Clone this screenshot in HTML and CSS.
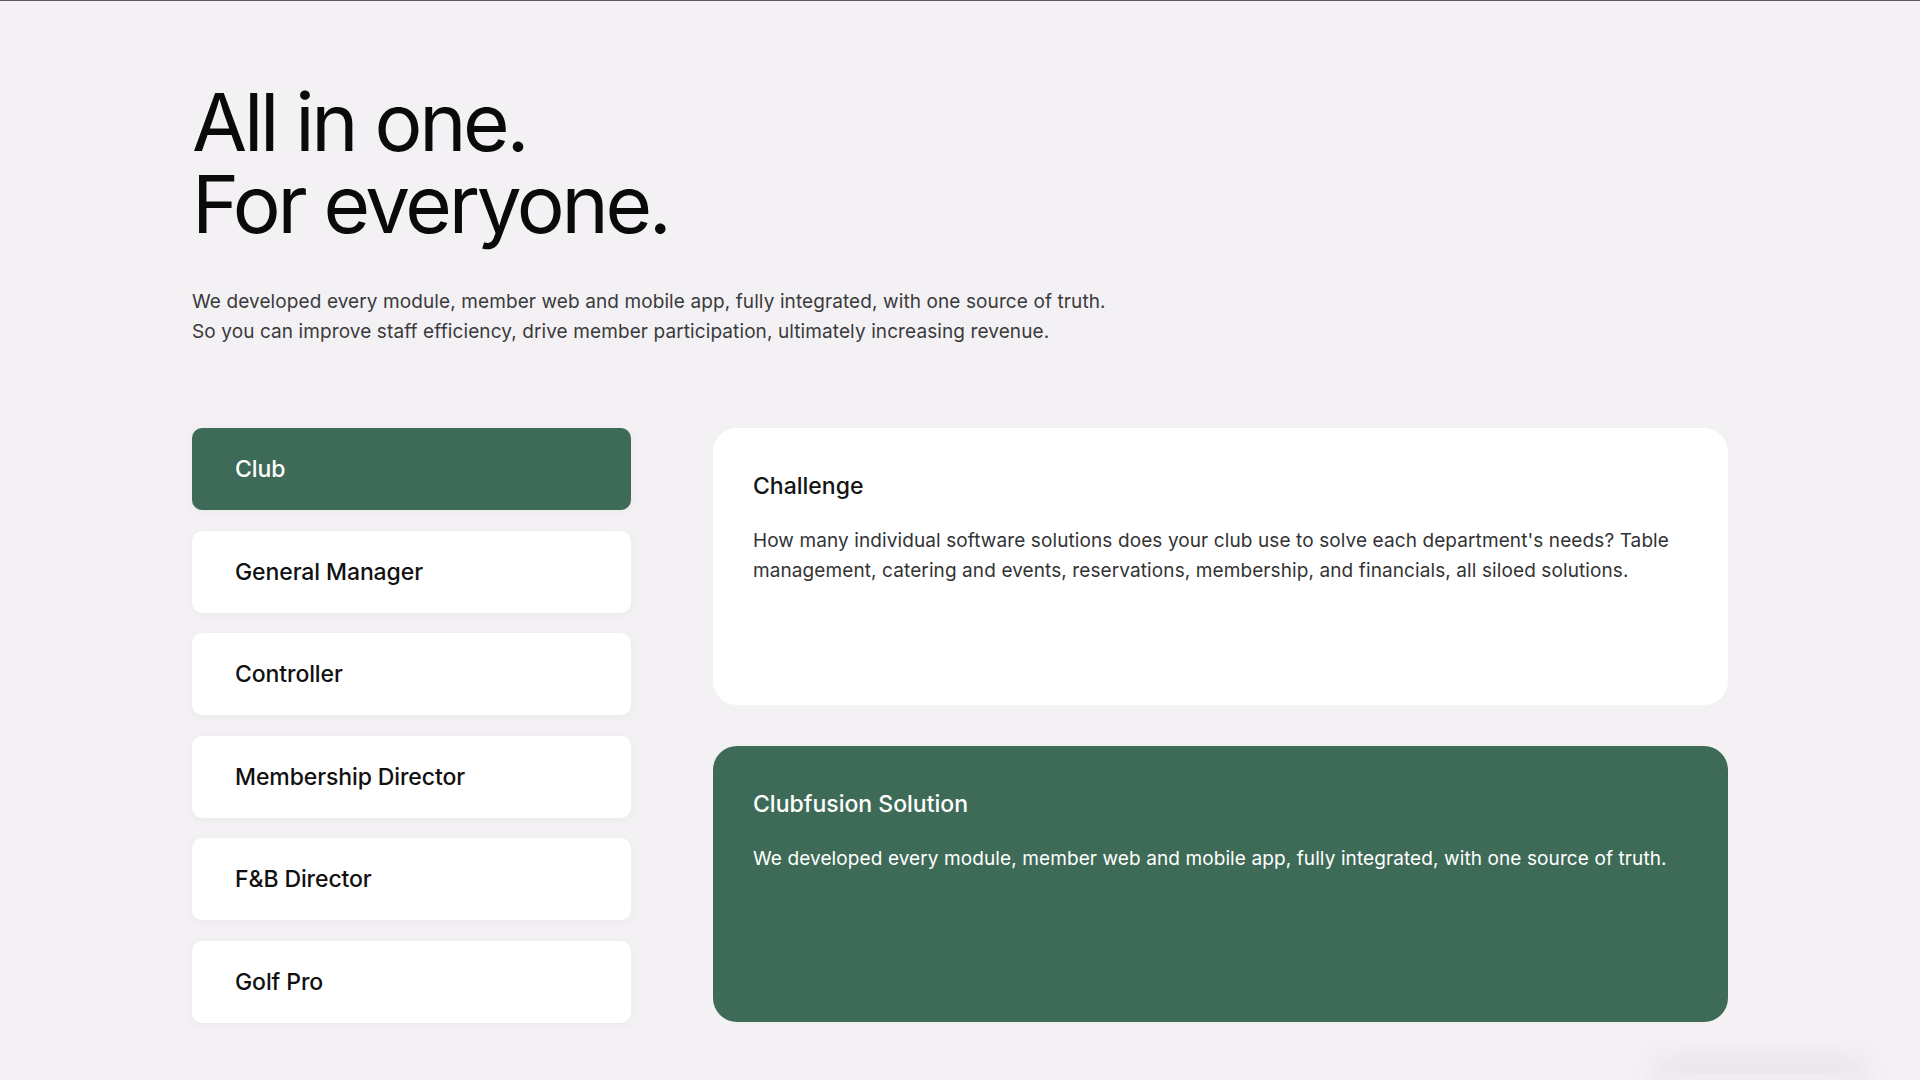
FILE: index.html
```html
<!DOCTYPE html>
<html lang="en">
<head>
<meta charset="utf-8">
<title>All in one. For everyone.</title>
<link rel="stylesheet" href="styles.css">
</head>
<body>
<main class="section">
  <h1 class="headline"><span class="headline-line">All in one.</span><span class="headline-line">For everyone.</span></h1>
  <p class="lead">We developed every module, member web and mobile app, fully integrated, with one source of truth.<br>So you can improve staff efficiency, drive member participation, ultimately increasing revenue.</p>
  <div class="explorer">
    <ul class="tabs">
      <li class="tab tab-active">Club</li>
      <li class="tab">General Manager</li>
      <li class="tab">Controller</li>
      <li class="tab">Membership Director</li>
      <li class="tab">F&amp;B Director</li>
      <li class="tab">Golf Pro</li>
    </ul>
    <div class="panels">
      <section class="card card-light">
        <h2 class="card-title">Challenge</h2>
        <p class="card-text">How many individual software solutions does your club use to solve each department's needs? Table management, catering and events, reservations, membership, and financials, all siloed solutions.</p>
      </section>
      <section class="card card-green">
        <h2 class="card-title">Clubfusion Solution</h2>
        <p class="card-text">We developed every module, member web and mobile app, fully integrated, with one source of truth.</p>
      </section>
    </div>
  </div>
</main>
<div class="floating-shadow"></div>
</body>
</html>
```

FILE: styles.css
```css
* { box-sizing: border-box; }

html, body {
  margin: 0;
  padding: 0;
  height: 100%;
  overflow: hidden;
}

body {
  background: #f3f1f4;
  border-top: 1px solid #5b595e;
  font-family: Inter, "Noto Sans", Arial, sans-serif;
  color: #0d0d0d;
  position: relative;
}

.section {
  padding: 80px 192px 0 192px;
}

.headline {
  margin: 0;
  font-size: 80px;
  line-height: 82px;
  font-weight: 400;
  letter-spacing: -3.3px;
  color: #0a0a0a;
}

.headline-line {
  display: block;
  height: 82px;
}

.lead {
  margin: 42px 0 0 0;
  font-size: 19px;
  line-height: 30px;
  color: #3a3a3c;
  letter-spacing: 0.1px;
}

.explorer {
  margin-top: 81px;
  display: grid;
  grid-template-columns: 439px 1015px;
  column-gap: 82px;
}

.tabs {
  list-style: none;
  margin: 0;
  padding: 0;
  display: flex;
  flex-direction: column;
  gap: 20.5px;
}

.tab {
  height: 82px;
  display: flex;
  align-items: center;
  padding-left: 43px;
  background: #ffffff;
  border-radius: 10px;
  font-size: 23px;
  font-weight: 500;
  letter-spacing: -0.1px;
  color: #111111;
  box-shadow: 0 2px 10px rgba(40, 30, 50, 0.04);
}

.tab-active {
  background: #3e6b58;
  color: #ffffff;
}

.panels {
  display: flex;
  flex-direction: column;
  gap: 41px;
}

.card {
  height: 276.5px;
  border-radius: 24px;
  padding: 42px 40px 0 40px;
}

.card-light {
  background: #ffffff;
  color: #141414;
}

.card-green {
  background: #3e6b58;
  color: #ffffff;
}

.card-title {
  margin: 0;
  font-size: 23px;
  line-height: 32px;
  font-weight: 500;
  letter-spacing: 0;
}

.card-text {
  margin: 24px 0 0 0;
  font-size: 19px;
  line-height: 30px;
  letter-spacing: 0.1px;
}

.card-light .card-text {
  color: #333335;
}

.floating-shadow {
  position: absolute;
  left: 1655px;
  top: 1072px;
  width: 210px;
  height: 8px;
  background: #eeecef;
  border-radius: 16px 16px 0 0;
  box-shadow: 0 -4px 32px rgba(40, 30, 50, 0.22);
}
```
